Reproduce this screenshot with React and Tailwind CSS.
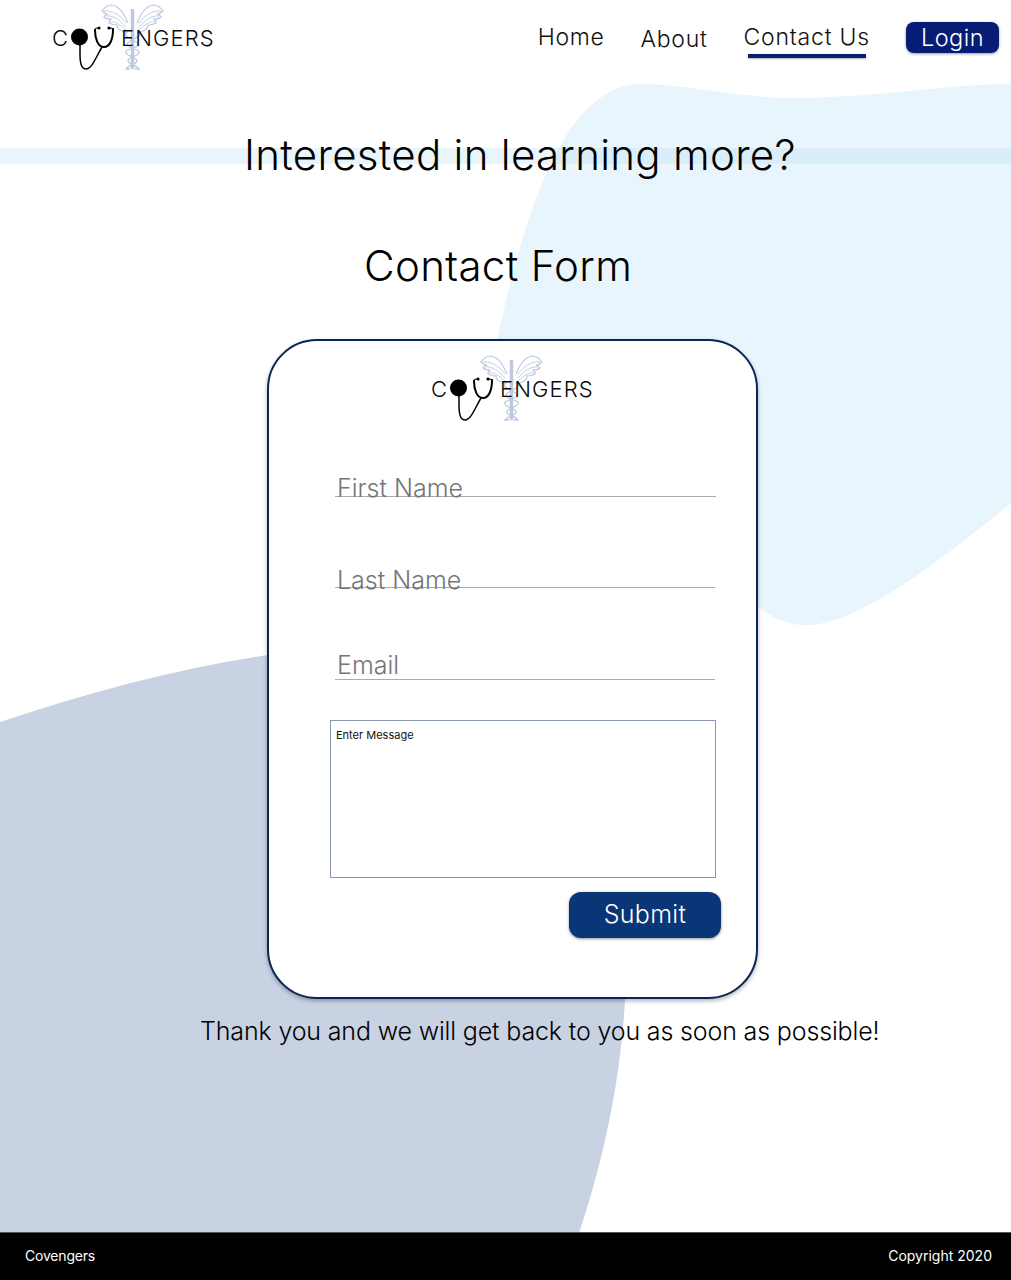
import React from "react";

// Covengers logo: lettering plus stethoscope and caduceus drawing
function Logo({ className }) {
  const wing = (
    <>
      <path d="M76 20 C72 10 66 3 60 2 C56 2 52 5 50 8 C52 10 54 11 56 11 C53 12 52 13 52 14 C54 16 57 16 59 16 C57 18 56 19 57 20 C60 22 63 22 65 22 C65 25 67 27 70 28 C72 29 74 30 76 30" />
      <path d="M52 8 C60 7 68 12 74 20 M54 13 C60 12 67 16 74 24 M58 19 C62 18 68 21 74 27" strokeWidth="0.9" />
    </>
  );
  return (
    <svg viewBox="0 0 162 70" width="162" height="70" className={className}>
      {/* caduceus */}
      <g fill="none" stroke="#bcc9df" strokeWidth="1.2">
        <path d="M80.5 6 L80.5 66" strokeWidth="3.5" />
        {wing}
        <g transform="translate(161 0) scale(-1 1)">{wing}</g>
        <path d="M74 30 C70 34 88 38 86 42 C84 46 72 46 74 50 C76 54 86 54 85 58 C84 62 76 62 74 66 L78 66 M87 30 C91 34 73 38 75 42 C77 46 89 46 87 50 C85 54 75 54 76 58 C77 62 85 62 87 66 L83 66" strokeWidth="1.3" />
      </g>
      <text x="0" y="43" fontFamily="Inter, sans-serif" fontSize="22" fontWeight="350" letterSpacing="1" fill="#0a0a0a">C</text>
      <text x="69" y="43" fontFamily="Inter, sans-serif" fontSize="22" fontWeight="350" letterSpacing="1.1" fill="#0a0a0a">ENGERS</text>
      {/* stethoscope */}
      <circle cx="27.5" cy="34" r="8.5" fill="#000" />
      <g fill="none" stroke="#000" strokeLinecap="round">
        <path d="M28 42 L28 52 C28 60 30 66 34 66 C40 66 44 54 50 44" strokeWidth="1.5" />
        <path d="M43 27 C43 36 46 44 52 44 C58 44 61 36 61 26" strokeWidth="2" />
        <path d="M43 27 C43 26 44 25 46 25 M61 26 C61 25 60 25 58 25" strokeWidth="1.2" />
      </g>
      <circle cx="47" cy="25" r="1.6" fill="#000" />
      <circle cx="57" cy="25" r="1.6" fill="#000" />
    </svg>
  );
}

// underlined input, the placeholder sits at a different height per field
function Field({ placeholder, className, inputClass }) {
  return (
    <div className={`h-[29px] border-b border-[#a9abae] ${className}`}>
      <input
        type="text"
        placeholder={placeholder}
        className={`block h-[28px] w-full bg-transparent pl-[2px] text-[25px] leading-[28px] font-[350] outline-none placeholder:text-[#757575] ${inputClass}`}
      />
    </div>
  );
}

export default function App() {
  return (
    <div className="relative flex min-h-[1280px] flex-col overflow-hidden bg-white font-['Inter',sans-serif] text-black">
      {/* background shapes */}
      <svg className="absolute left-0 top-0" width="1011" height="1280" viewBox="0 0 1011 1280">
        <path
          d="M1011 84 C950 84 880 97 800 98 C740 99 690 84 640 84 C570 86 530 190 497 340 L490 560 L757 606 C775 620 790 626 812 625 C860 620 930 570 1011 503 Z"
          fill="#e8f5fc"
        />
        <path
          d="M0 722 C90 692 180 668 268 655 C500 630 628 790 625 1000 C620 1090 600 1170 579 1233 L0 1233 Z"
          fill="#c8d2e3"
        />
        <rect x="0" y="148" width="1011" height="16" fill="#bfe3f3" fillOpacity="0.35" />
      </svg>

      {/* nav */}
      <header className="relative flex h-[76px] items-start justify-between pl-[52px] pr-[12px]">
        <Logo className="mt-[3px]" />
        <nav className="flex items-start text-[23px] leading-[34px] font-light text-[#111]">
          <a className="mt-[20px] tracking-[0.7px]">Home</a>
          <a className="ml-[36px] mt-[22px] tracking-[0.7px]">About</a>
          <a className="ml-[36px] mt-[20px] flex flex-col items-center tracking-[0.8px]">
            Contact Us
            <span className="h-[4px] w-[118px] bg-[#0b1d6f] shadow-[0_1px_2px_rgba(0,0,0,0.3)]"></span>
          </a>
          <button className="ml-[36px] mt-[22px] h-[31px] w-[93px] rounded-[8px] bg-[#071c75] text-[23.5px] leading-[30px] font-[350] tracking-[0.5px] text-white shadow-[0_1px_3px_rgba(0,0,0,0.4)]">
            Login
          </button>
        </nav>
      </header>

      <main className="relative flex flex-col">
        <h1 className="ml-[244px] mt-[52px] text-[42px] leading-[54px] font-[350] tracking-[0.3px] whitespace-nowrap">
          Interested in learning more?
        </h1>
        <h2 className="ml-[364px] mt-[57px] text-[42px] leading-[54px] font-[350] tracking-[0.35px] whitespace-nowrap">
          Contact Form
        </h2>

        {/* card */}
        <form className="ml-[267px] mt-[46px] flex h-[660px] w-[491px] flex-col rounded-[50px] border-2 border-[#0a2558] bg-white shadow-[0_2px_4px_rgba(0,0,0,0.3)]">
          <Logo className="ml-[162px] mt-[13px]" />
          <Field placeholder="First Name" className="ml-[66px] mt-[44px] w-[381px]" inputClass="mt-[6px]" />
          <Field placeholder="Last Name" className="ml-[66px] mt-[62px] w-[380px]" inputClass="mt-[7px]" />
          <Field placeholder="Email" className="ml-[66px] mt-[63px] w-[380px]" inputClass="mt-0" />
          <textarea
            placeholder="Enter Message"
            className="ml-[61px] mt-[40px] block h-[158px] w-[386px] resize-none border border-[#8a97b1] bg-white px-[5px] py-[6px] text-[11px] leading-[16px] outline-none placeholder:text-[#111]"
          />
          <button
            type="button"
            className="ml-[300px] mt-[14px] h-[46px] w-[152px] rounded-[12px] bg-[#0a3677] text-[25px] font-[350] tracking-[0.3px] text-white shadow-[0_1px_3px_rgba(0,0,0,0.45)]"
          >
            Submit
          </button>
        </form>

        <p className="ml-[200px] mt-[16px] text-[25px] leading-[32px] font-[350] tracking-[-0.15px] whitespace-nowrap">
          Thank you and we will get back to you as soon as possible!
        </p>
      </main>

      {/* footer */}
      <footer className="relative mt-auto flex h-[48px] items-center justify-between border-t border-[#555] bg-black pb-[2px] pl-[25px] pr-[19px] text-[14px] text-white">
        <span className="tracking-[-0.2px]">Covengers</span>
        <span>Copyright 2020</span>
      </footer>
    </div>
  );
}
